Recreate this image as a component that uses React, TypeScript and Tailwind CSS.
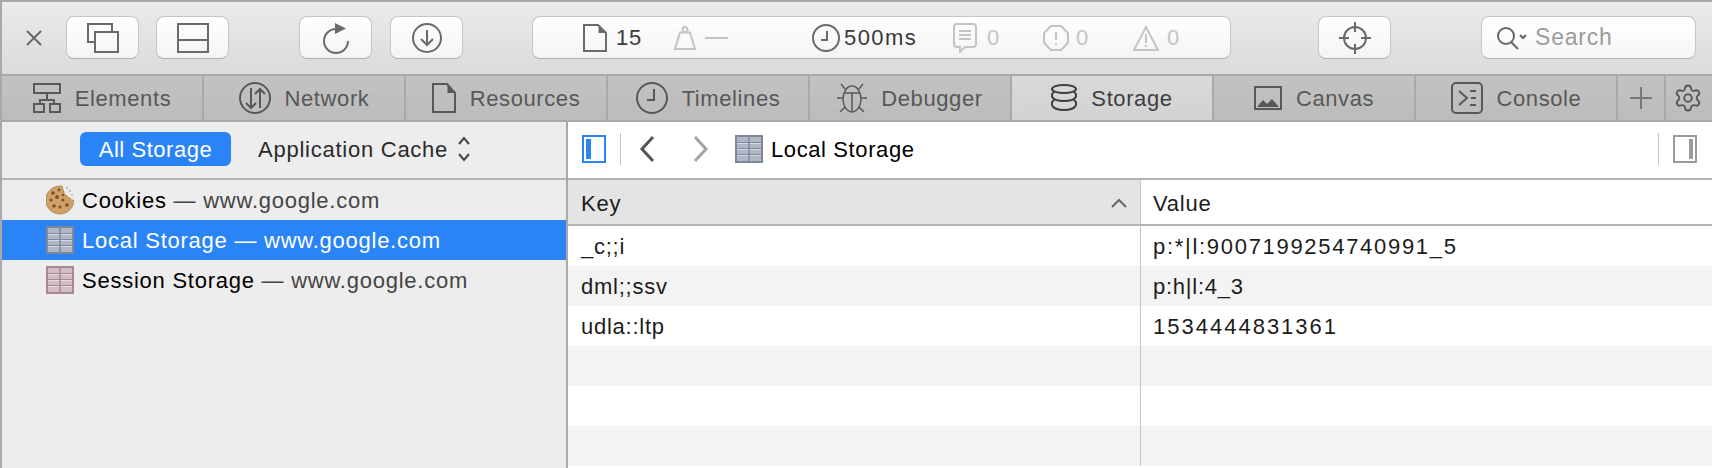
import type { ReactNode } from "react";
import { Settings } from "lucide-react";

// Web Inspector, Storage tab: all icons are hand drawn at their 2x pixel size.
function Icon({ w, h, className, children }: { w: number; h: number; className?: string; children: ReactNode }) {
  return (
    <svg
      width={w}
      height={h}
      viewBox={`0 0 ${w} ${h}`}
      fill="none"
      stroke="currentColor"
      strokeWidth="2"
      className={`shrink-0 ${className ?? ""}`}
    >
      {children}
    </svg>
  );
}

function ToolButton({ className, children }: { className?: string; children: ReactNode }) {
  return (
    <div
      className={`flex h-[43px] items-center justify-center rounded-[8px] border border-[#c6c6c6] border-b-[#b0b0b0] bg-gradient-to-b from-white to-[#f4f4f4] text-[#6a6a6a] ${className ?? ""}`}
    >
      {children}
    </div>
  );
}

function TableIcon({ tone }: { tone: "blue" | "red" }) {
  const fill = tone === "blue" ? "#b0b7c6" : "#d0bcc4";
  const line = tone === "blue" ? "#7f8798" : "#a98792";
  const light = tone === "blue" ? "#d5d9e1" : "#e6dbdf";
  return (
    <svg width="28" height="28" viewBox="0 0 28 28" className="shrink-0">
      <rect x="1" y="1" width="26" height="26" fill={fill} stroke={line} strokeWidth="2" />
      <path d="M2 7.500h24M2 13.500h24M2 19.500h24" stroke={line} strokeWidth="1" />
      <path d="M2 8.500h24M2 14.500h24M2 20.500h24" stroke={light} strokeWidth="1" />
      <path d="M14 2v24" stroke={line} strokeWidth="1.500" />
    </svg>
  );
}

function CookieIcon() {
  return (
    <svg width="28" height="30" viewBox="0 0 28 30" className="shrink-0">
      <path
        d="M16.500 1.300A14 14 0 1 0 27.800 15c-1.800.4-3.300-.5-3.600-2-1.700.2-3-.8-3.100-2.400-1.700 0-3.100-1.200-3.100-3-.100-2.500-2.300-3.800-1.500-6.300Z"
        fill="#cfa164"
        stroke="#ab8048"
        strokeWidth="0.800"
      />
      {[
        [7, 8, 1.7],
        [13, 5, 1.4],
        [5, 15, 1.5],
        [11, 12, 1.9],
        [17, 15, 1.5],
        [8, 21, 1.8],
        [14, 22, 1.5],
        [21, 20, 1.8],
        [17, 10, 1.2],
      ].map(([cx, cy, r]) => (
        <circle key={`${cx}-${cy}`} cx={cx} cy={cy} r={r} fill="#7a4f2a" />
      ))}
      <g fill="#b9b2a6">
        <circle cx="21" cy="3" r="1.100" />
        <circle cx="24" cy="6" r="1.100" />
        <circle cx="26" cy="10" r="0.900" />
      </g>
    </svg>
  );
}

const tabs: { label: string; active?: boolean; icon: ReactNode }[] = [
  {
    label: "Elements",
    icon: (
      <Icon w={28} h={30}>
        <rect x="1" y="1" width="26" height="9" />
        <path d="M14 10v7M7 21v-4h14v4" />
        <rect x="1" y="21" width="10" height="8" />
        <rect x="17" y="21" width="10" height="8" />
      </Icon>
    ),
  },
  {
    label: "Network",
    icon: (
      <Icon w={32} h={32}>
        <circle cx="16" cy="16" r="15" />
        <path d="M12 6v20M7 21l5 5 5-5M21 26V7M16 12l5-5 5 5" />
      </Icon>
    ),
  },
  {
    label: "Resources",
    icon: (
      <Icon w={24} h={30}>
        <path d="M1 1h14l8 9v19H1Z" />
        <path d="M15.500 2v8h7Z" fill="currentColor" stroke="none" />
      </Icon>
    ),
  },
  {
    label: "Timelines",
    icon: (
      <Icon w={32} h={32}>
        <circle cx="16" cy="16" r="15" />
        <path d="M18 7v11h-7" />
      </Icon>
    ),
  },
  {
    label: "Debugger",
    icon: (
      <Icon w={30} h={30} className="[stroke-width:1.5]">
        <ellipse cx="15" cy="16" rx="9" ry="13" />
        <path d="M7 10h16M15 10v19M4 1l4 5M26 1l-4 5M0 15h6M24 15h6M3 29l5-5M27 29l-5-5" />
      </Icon>
    ),
  },
  {
    label: "Storage",
    active: true,
    icon: (
      <Icon w={26} h={28}>
        <ellipse cx="13" cy="5" rx="12" ry="4" />
        <path d="M3 8C-1 11 0 17 13 17S27 11 23 8M3 16C-1 19 0 26 13 26S27 19 23 16" />
      </Icon>
    ),
  },
  {
    label: "Canvas",
    icon: (
      <Icon w={28} h={24}>
        <rect x="1" y="1" width="26" height="22" />
        <path d="M3 21l6-7 4 4 5-5 7 8Z" fill="currentColor" stroke="none" />
      </Icon>
    ),
  },
  {
    label: "Console",
    icon: (
      <Icon w={32} h={32}>
        <rect x="1" y="1" width="30" height="30" rx="4" />
        <path d="M8 9l8 7-8 7M19 9h6M20 16h5M19 23h6" />
      </Icon>
    ),
  },
];

const sources = [
  { name: "Cookies", icon: <CookieIcon /> },
  { name: "Local Storage", icon: <TableIcon tone="blue" />, selected: true },
  { name: "Session Storage", icon: <TableIcon tone="red" /> },
];

// WHY: digits in the reference run wider than in Liberation Sans, so each value carries its own tracking
const rows = [
  { key: "_c;;i", value: "p:*|l:9007199254740991_5", spacing: "tracking-[1.7px]" },
  { key: "dml;;ssv", value: "p:h|l:4_3", spacing: "tracking-[0.75px]" },
  { key: "udla::ltp", value: "1534444831361", spacing: "tracking-[2px]" },
  { key: "", value: "", spacing: "" },
  { key: "", value: "", spacing: "" },
  { key: "", value: "", spacing: "" },
];

export default function App() {
  return (
    <div
      className="flex h-[468px] w-[1712px] flex-col overflow-hidden border-t-2 border-l-2 border-[#a9a9a9] bg-white text-[22px] tracking-[0.75px] text-[#1c1c1c]"
      style={{ fontFamily: '"Liberation Sans", Arial, sans-serif' }}
    >
      {/* toolbar */}
      <div className="flex h-[74px] shrink-0 items-center border-b-2 border-[#a9a9a9] bg-gradient-to-b from-[#ebebeb] to-[#dbdbdb] pb-[2px] pt-[1px]">
        <div className="ml-[24px] mr-[24px] text-[#6a6a6a]">
          <Icon w={16} h={16}>
            <path d="M1 1l14 14M15 1L1 15" />
          </Icon>
        </div>
        <ToolButton className="w-[73px]">
          <Icon w={32} h={30}>
            <path d="M7 19H1V1h24v8" />
            <rect x="8" y="9" width="23" height="20" />
          </Icon>
        </ToolButton>
        <ToolButton className="ml-[17px] w-[73px]">
          <Icon w={32} h={30}>
            <rect x="1" y="1" width="30" height="28" />
            <path d="M1 17h30" />
          </Icon>
        </ToolButton>
        <ToolButton className="ml-[70px] w-[73px]">
          <Icon w={26} h={32}>
            <path d="M13 7A12 12 0 1 0 25 19" />
            <path d="M12 1l11 5.500-11 5.500Z" fill="currentColor" stroke="none" />
          </Icon>
        </ToolButton>
        <ToolButton className="ml-[18px] w-[73px]">
          <Icon w={30} h={30}>
            <circle cx="15" cy="15" r="14" />
            <path d="M15 7v15M9 16l6 6 6-6" />
          </Icon>
        </ToolButton>

        {/* activity bar */}
        <div className="ml-[69px] flex h-[43px] w-[699px] items-center rounded-[8px] border border-[#c6c6c6] border-b-[#b0b0b0] bg-gradient-to-b from-white to-[#f4f4f4] pl-[50px]">
          <div className="flex w-[90px] items-center gap-[9px] text-[#3a3a3a]">
            <Icon w={24} h={28} className="text-[#6a6a6a]">
              <path d="M1 1h14l8 8v18H1Z" />
              <path d="M15.500 2v7h7Z" fill="currentColor" stroke="none" />
            </Icon>
            15
          </div>
          <div className="flex w-[139px] items-center gap-[8px] text-[#c4c4c4]">
            <Icon w={24} h={24}>
              <circle cx="12" cy="3.500" r="2.500" />
              <path d="M7 6.500h10l5 16.500H2Z" />
            </Icon>
            <div className="h-[2px] w-[23px] bg-[#c4c4c4]" />
          </div>
          <div className="flex w-[141px] items-center gap-[4px] tracking-[1.4px] text-[#3a3a3a]">
            <Icon w={28} h={28} className="text-[#6a6a6a]">
              <circle cx="14" cy="14" r="13" />
              <path d="M15 7v9H9" />
            </Icon>
            500ms
          </div>
          <div className="flex w-[90px] items-center gap-[10px] text-[#c4c4c4]">
            <Icon w={24} h={30}>
              <path d="M4 1h16a3 3 0 0 1 3 3v17a3 3 0 0 1-3 3H12l-5 5v-5H4a3 3 0 0 1-3-3V4a3 3 0 0 1 3-3Z" />
              <path d="M6 8h12M6 12h12M6 16h12" />
            </Icon>
            0
          </div>
          <div className="flex w-[90px] items-center gap-[7px] text-[#c4c4c4]">
            <Icon w={26} h={26}>
              <path d="M8 1h10l7 7v10l-7 7H8l-7-7V8Z" />
              <path d="M13 7v8M13 18v2" />
            </Icon>
            0
          </div>
          <div className="flex items-center gap-[8px] text-[#c4c4c4]">
            <Icon w={26} h={26}>
              <path d="M13 2l12 23H1Z" />
              <path d="M13 9v9M13 20v2" />
            </Icon>
            0
          </div>
        </div>

        <ToolButton className="ml-[87px] w-[73px]">
          <Icon w={32} h={32}>
            <circle cx="16" cy="16" r="11" />
            <path d="M16 0v10M16 22v10M0 16h10M22 16h10" />
          </Icon>
        </ToolButton>
        <div className="ml-[90px] flex h-[43px] w-[215px] items-center rounded-[8px] border border-[#c6c6c6] border-b-[#b0b0b0] bg-gradient-to-b from-white to-[#f6f6f6] pl-[14px] text-[23px] tracking-[0.8px] text-[#9c9c9c]">
          <Icon w={32} h={24} className="mr-[7px] text-[#666666]">
            <circle cx="10" cy="10" r="8" />
            <path d="M15 16l7 7M24 9l3 3 3-3" />
          </Icon>
          Search
        </div>
      </div>

      {/* tab bar */}
      <div className="flex h-[46px] shrink-0 border-b-2 border-[#a9a9a9] bg-gradient-to-b from-[#c2c2c2] to-[#bcbcbc] tracking-[0.6px] text-[#585858]">
        {tabs.map((t) => (
          <div
            key={t.label}
            className={`flex w-[202px] items-center justify-center gap-[14px] border-r-2 border-[#a9a9a9] ${t.active ? "bg-gradient-to-b from-[#dadada] to-[#d2d2d2] text-[#3e3e3e]" : ""}`}
          >
            {t.icon}
            {t.label}
          </div>
        ))}
        <div className="flex w-[48px] items-center justify-center border-r-2 border-[#a9a9a9] text-[#787878]">
          <Icon w={24} h={24}>
            <path d="M12 1v22M1 12h22" />
          </Icon>
        </div>
        <div className="flex flex-1 items-center justify-center pr-[3px] text-[#585858]">
          <Settings size={30} strokeWidth={1.500} />
        </div>
      </div>

      {/* content */}
      <div className="flex min-h-0 flex-1">
        <div className="w-[566px] shrink-0 border-r-2 border-[#a9a9a9] bg-[#ededed]">
          <div className="flex h-[58px] items-center border-b-2 border-[#b4b4b4] pb-[2px] pl-[78px] text-[#2a2a2a]">
            <div className="flex h-[34px] w-[151px] items-center justify-center rounded-[6px] bg-[#2a84f6] tracking-[0.55px] text-white">
              All Storage
            </div>
            <span className="ml-[27px]">Application Cache</span>
            <Icon w={14} h={30} className="ml-[9px] text-[#444444]">
              <path d="M2 10l5-6 5 6M2 20l5 6 5-6" />
            </Icon>
          </div>
          {sources.map((s) => (
            <div
              key={s.name}
              className={`flex h-[40px] items-center gap-[8px] pl-[44px] ${s.selected ? "bg-[#2a84f6] text-white" : "text-black"}`}
            >
              {s.icon}
              <span>
                {s.name}
                <span className={s.selected ? "text-white" : "text-[#444444]"}> — www.google.com</span>
              </span>
            </div>
          ))}
        </div>

        <div className="flex min-w-0 flex-1 flex-col">
          {/* navigation bar */}
          <div className="flex h-[58px] shrink-0 items-center border-b-2 border-[#b4b4b4] pb-[2px] pl-[14px] text-black">
            <svg width="24" height="28" viewBox="0 0 24 28" fill="none" className="shrink-0">
              <rect x="1" y="1" width="22" height="26" stroke="#2a84f6" strokeWidth="2" />
              <rect x="4" y="4" width="5" height="20" fill="#2a84f6" />
            </svg>
            <div className="ml-[14px] h-[32px] w-[1px] bg-[#c4c4c4]" />
            <Icon w={16} h={28} className="ml-[18px] text-[#555555] [stroke-width:3]">
              <path d="M14 2L3 14l11 12" />
            </Icon>
            <Icon w={16} h={28} className="ml-[38px] text-[#a4a4a4] [stroke-width:3]">
              <path d="M2 2l11 12L2 26" />
            </Icon>
            <div className="ml-[26px]">
              <TableIcon tone="blue" />
            </div>
            <span className="ml-[8px] pt-[1px] tracking-[0.6px]">Local Storage</span>
            <div className="ml-auto h-[32px] w-[1px] bg-[#c4c4c4]" />
            <svg width="24" height="28" viewBox="0 0 24 28" fill="none" className="ml-[14px] mr-[15px] shrink-0">
              <rect x="1" y="1" width="22" height="26" stroke="#9a9a9a" strokeWidth="2" />
              <rect x="16" y="4" width="4" height="20" fill="#9a9a9a" />
            </svg>
          </div>

          {/* table */}
          <div className="flex h-[46px] shrink-0 border-b-2 border-[#b4b4b4]">
            <div className="flex w-[573px] items-center justify-between border-r border-[#c4c4c4] bg-[#e4e4e4] px-[13px] pt-[2px]">
              Key
              <Icon w={16} h={10} className="text-[#666666]">
                <path d="M1 9l7-7 7 7" />
              </Icon>
            </div>
            <div className="flex flex-1 items-center pl-[12px] pt-[2px]">Value</div>
          </div>
          {rows.map((r, i) => (
            <div key={i} className={`flex h-[40px] shrink-0 ${i % 2 === 1 ? "bg-[#f3f3f3]" : "bg-white"}`}>
              <div className="flex w-[573px] items-center border-r border-[#c4c4c4] pl-[13px] pt-[1px]">{r.key}</div>
              <div className={`flex flex-1 items-center pl-[12px] pt-[1px] ${r.spacing}`}>{r.value}</div>
            </div>
          ))}
        </div>
      </div>
    </div>
  );
}
